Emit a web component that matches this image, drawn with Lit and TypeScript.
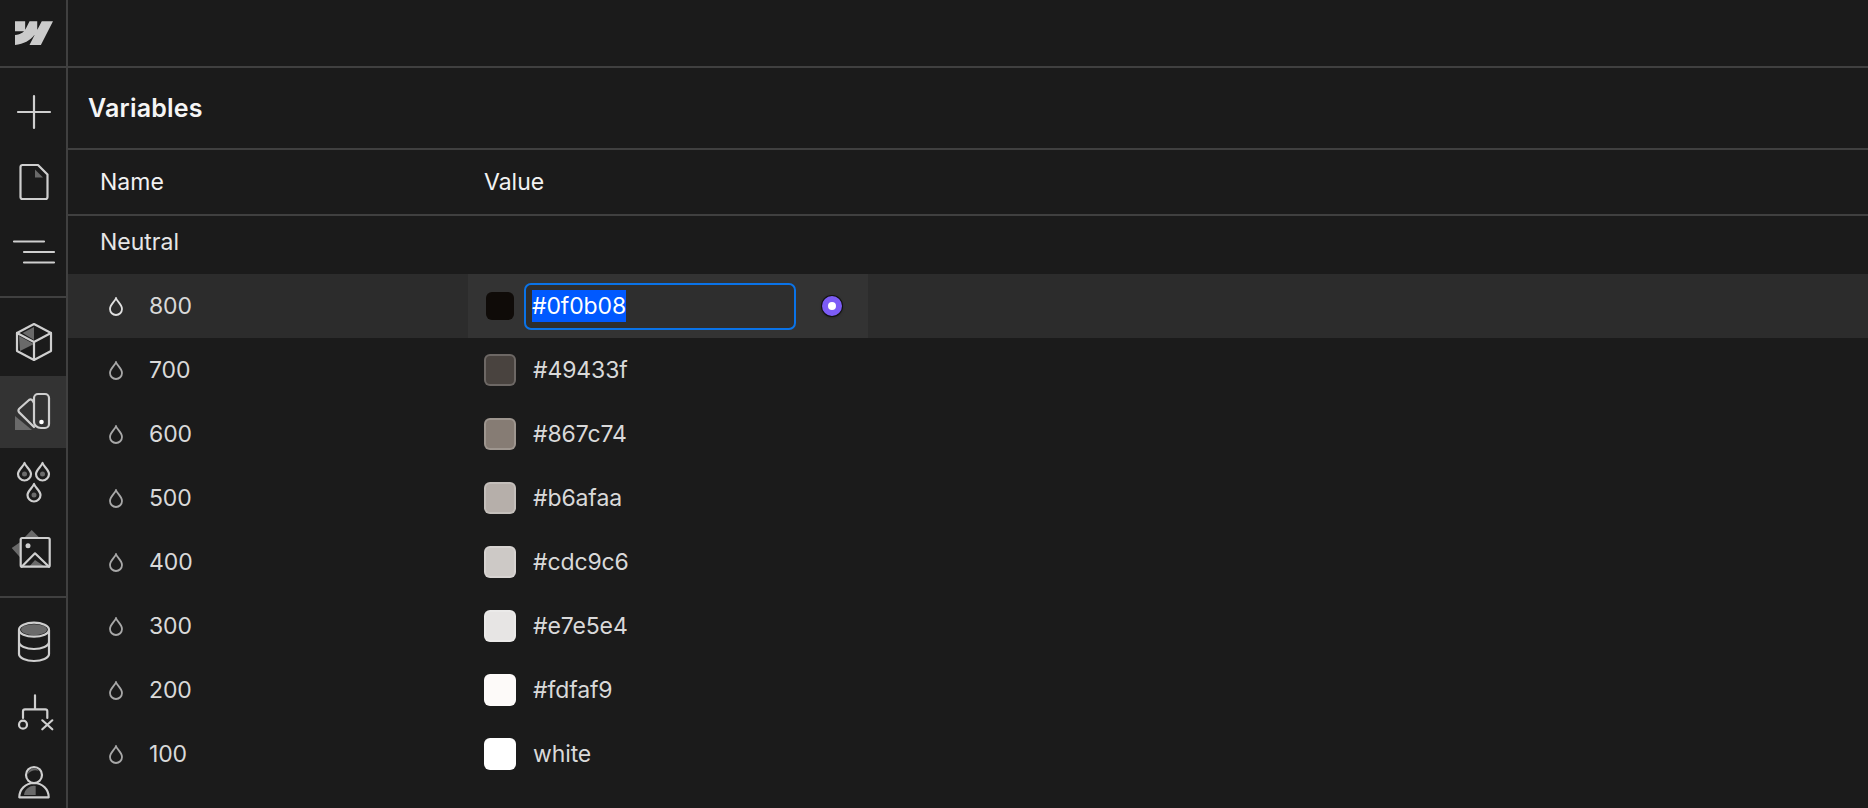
import { LitElement, html, css, svg } from 'lit';
import { customElement } from 'lit/decorators.js';

const rows = [
  { name: '800', color: '#0f0b08', value: '#0f0b08' },
  { name: '700', color: '#49433f', value: '#49433f' },
  { name: '600', color: '#867c74', value: '#867c74' },
  { name: '500', color: '#b6afaa', value: '#b6afaa' },
  { name: '400', color: '#cdc9c6', value: '#cdc9c6' },
  { name: '300', color: '#e7e5e4', value: '#e7e5e4' },
  { name: '200', color: '#fdfaf9', value: '#fdfaf9' },
  { name: '100', color: '#ffffff', value: 'white' },
];

const line = '#cfcfcf';
const fill = '#6a6a6a';

const icon = (w: number, h: number, body: unknown) =>
  html`<svg width=${w} height=${h} viewBox="0 0 ${w} ${h}" fill="none" stroke=${line} stroke-width="2.2" stroke-linejoin="round" stroke-linecap="round" style="overflow:visible">${body}</svg>`;

const drop = html`<svg class="drop" width="14" height="19" viewBox="0 0 14 19" fill="none" stroke="currentColor" stroke-width="1.8"><path d="M7 1.2C5.800 4.500 1 7.800 1 12a6 6 0 0 0 12 0C13 7.800 8.200 4.500 7 1.200Z"/></svg>`;

const dropPath = (x: number, y: number) =>
  svg`<path transform="translate(${x} ${y})" d="M6.500 0C5.300 3.500 0 7 0 11a6.500 6.500 0 0 0 13 0C13 7 7.700 3.500 6.500 0Z"/><circle cx=${x + 6.5} cy=${y + 11} r="2.500" fill=${fill} stroke="none"/>`;

const logo = html`<svg width="38" height="24" viewBox="0 0 1080 675"><path fill="#cbcbcb" d="M1080 0 735.400 675H411.700L556 395H549.500C430.500 550 252.900 652 0 675V399S161.800 389.500 256.900 289.500H0V0H288.800V237.500H295.300L413.400 0H631.800V236H638.300L760.700 0Z"/></svg>`;

const navTop = [
  icon(34, 34, svg`<path d="M17 1v32M1 17h32"/>`),
  icon(30, 36, svg`<path d="M3.500 1H19l9.500 9.500V33a2 2 0 0 1-2 2H3.500a2 2 0 0 1-2-2V3a2 2 0 0 1 2-2Z"/><path d="M16 5.500 24 13.500H16Z" fill=${fill} stroke="none"/>`),
  icon(42, 24, svg`<path d="M1 1.500h30M11 12h30M11 22.500h30"/>`),
];

const navMid = [
  icon(36, 38, svg`<path d="M18 4 6.500 10 18 17Z M3 13l14 7.500v1L4 28Z" fill=${fill} stroke="none"/><path d="M18 1 35 10v18L18 37 1 28V10Z"/><path d="M1 10l17 9 17-9M18 19v18"/>`),
  icon(36, 38, svg`<path d="M-1 23V37H16Z" fill=${fill} stroke="none"/><path d="M18 5a4 4 0 0 1 4-4h7a4 4 0 0 1 4 4v26a4 4 0 0 1-4 4h-4c-4 0-7-3-7-6Z"/><path d="M18 10 16.500 7.500a2.500 2.500 0 0 0-3.500-.5L3.200 15.800a2.500 2.500 0 0 0 0 3.600L18 34"/><circle cx="25.500" cy="29" r="2.300" fill="#fff" stroke="none"/>`),
  icon(34, 42, svg`${dropPath(1, 2)}${dropPath(19, 2)}${dropPath(10.5, 23)}`),
  icon(46, 44, svg`<path d="M13 8 20.700 0 28.700 8ZM9.700 11.700 0.700 18 9.700 28Z" fill=${fill} stroke="none"/><path d="M18 36.700 24 30 34 36.700Z" fill=${fill} stroke="none"/><rect x="9.700" y="8" width="29" height="28.700" rx="1.500"/><path d="M10.700 36.700 24 23.300 38 36.700"/><circle cx="17" cy="15.700" r="2.500" fill=${line} stroke="none"/>`),
];

const navBottom = [
  icon(34, 40, svg`<ellipse cx="17" cy="7.700" rx="13" ry="5.500" fill=${fill} stroke="none"/><ellipse cx="17" cy="7.700" rx="15" ry="7"/><path d="M2 8v24c0 4 7 7 15 7s15-3 15-7V8M2 20c0 4 7 7 15 7s15-3 15-7"/>`),
  icon(38, 36, svg`<path d="M20 1.300v14M8 24v-6.700a2 2 0 0 1 2-2h20.300a2 2 0 0 1 2 2V24"/><circle cx="8" cy="30.700" r="4"/><path d="M27.300 26.300l10 9M37.300 26.300l-10 9"/>`),
  icon(32, 34, svg`<path d="M10 9a6 6 0 0 1 11-3 10 10 0 0 0-11 3Z" fill=${fill} stroke="none"/><circle cx="16" cy="10" r="8"/><path d="M6 30a10 10 0 0 1 11.700-9V30Z" fill=${fill} stroke="none"/><path d="M1.300 32.300c0-8 6-14 14.700-14.300 8.700.3 14.700 6.300 14.700 14.300Z"/>`),
];

@customElement('app-root')
export class AppRoot extends LitElement {
  static styles = css`
    :host {
      display: flex;
      height: 808px;
      width: 1868px;
      overflow: hidden;
      background: #1b1b1b;
      color: #e8e8e8;
      font-family: Inter, 'Noto Sans', sans-serif;
      font-size: 23px;
    }
    .side {
      width: 66px;
      flex: none;
      border-right: 2px solid #404040;
      display: flex;
      flex-direction: column;
    }
    .logo {
      height: 66px;
      flex: none;
      display: flex;
      align-items: center;
      justify-content: center;
      padding-left: 2px;
      border-bottom: 2px solid #404040;
    }
    .group {
      display: flex;
      flex-direction: column;
      border-bottom: 2px solid #404040;
    }
    .group.a,
    .group.b {
      padding: 9px 0;
    }
    .group.c {
      padding-top: 9px;
      border-bottom: none;
    }
    .cell {
      height: 70px;
      display: flex;
      align-items: center;
      justify-content: center;
      padding-left: 2px;
    }
    .cell.active {
      background: #333333;
      height: 72px;
      margin: -1px 0;
    }
    .main {
      flex: 1;
      display: flex;
      flex-direction: column;
      min-width: 0;
    }
    .topbar {
      height: 66px;
      flex: none;
      border-bottom: 2px solid #404040;
    }
    .title {
      height: 80px;
      flex: none;
      display: flex;
      align-items: center;
      padding-left: 20px;
      font-size: 25px;
      font-weight: 600;
      letter-spacing: 0.2px;
      color: #f5f5f5;
      border-bottom: 2px solid #404040;
    }
    .head,
    .row {
      display: grid;
      grid-template-columns: 400px 400px 1fr;
      align-items: center;
    }
    .head {
      height: 64px;
      border-bottom: 2px solid #404040;
      color: #f2f2f2;
    }
    .head span {
      padding-left: 16px;
    }
    .head span:first-child {
      padding-left: 32px;
    }
    .section {
      height: 52px;
      padding-bottom: 6px;
      display: flex;
      align-items: center;
      padding-left: 32px;
      color: #e6e6e6;
    }
    .row {
      height: 64px;
      color: #d9d9d9;
      letter-spacing: -0.12px;
    }
    .row.sel {
      background: #2c2c2c;
    }
    .name {
      display: flex;
      align-items: center;
      gap: 26px;
      padding-left: 41px;
    }
    .drop {
      color: #a8a8a8;
      flex: none;
    }
    .row.sel .drop {
      color: #e0e0e0;
    }
    .value {
      height: 100%;
      display: flex;
      align-items: center;
      padding-left: 16px;
      box-sizing: border-box;
      gap: 17px;
    }
    .row.sel .value {
      background: #333333;
      padding-left: 18px;
      gap: 10px;
    }
    .swatch {
      width: 32px;
      height: 32px;
      flex: none;
      box-sizing: border-box;
      border-radius: 6px;
      border: 2px solid rgba(255, 255, 255, 0.2);
    }
    .row.sel .swatch {
      width: 28px;
      height: 28px;
      border: none;
    }
    .input {
      width: 272px;
      height: 47px;
      box-sizing: border-box;
      border: 2px solid #0a73e8;
      border-radius: 7px;
      background: #2e2e2e;
      display: flex;
      align-items: center;
      padding-left: 6px;
      color: #fff;
    }
    .input mark {
      display: inline-block;
      background: #0059ff;
      color: #fff;
      padding: 0;
      line-height: 32px;
    }
    .radio {
      margin-left: 16px;
      border-radius: 50%;
      background: #fff;
      border: 6px solid #7c5cf6;
      box-sizing: content-box;
      width: 8px;
      height: 8px;
      box-shadow: 0 0 0 1px #111, 0 1px 3px rgba(0, 0, 0, 0.6);
      flex: none;
    }
  `;

  render() {
    return html`
      <div class="side">
        <div class="logo">${logo}</div>
        <div class="group a">${navTop.map((i) => html`<div class="cell">${i}</div>`)}</div>
        <div class="group b">${navMid.map((i, n) => html`<div class="cell ${n === 1 ? 'active' : ''}">${i}</div>`)}</div>
        <div class="group c">${navBottom.map((i) => html`<div class="cell">${i}</div>`)}</div>
      </div>
      <div class="main">
        <div class="topbar"></div>
        <div class="title">Variables</div>
        <div class="head"><span>Name</span><span>Value</span></div>
        <div class="section">Neutral</div>
        ${rows.map((r, i) => html`
          <div class="row ${i === 0 ? 'sel' : ''}">
            <div class="name">${drop}<span>${r.name}</span></div>
            <div class="value">
              <div class="swatch" style="background:${r.color}"></div>
              ${i === 0
                ? html`<div class="input"><mark>${r.value}</mark></div><div class="radio"></div>`
                : html`<span>${r.value}</span>`}
            </div>
          </div>
        `)}
      </div>
    `;
  }
}
